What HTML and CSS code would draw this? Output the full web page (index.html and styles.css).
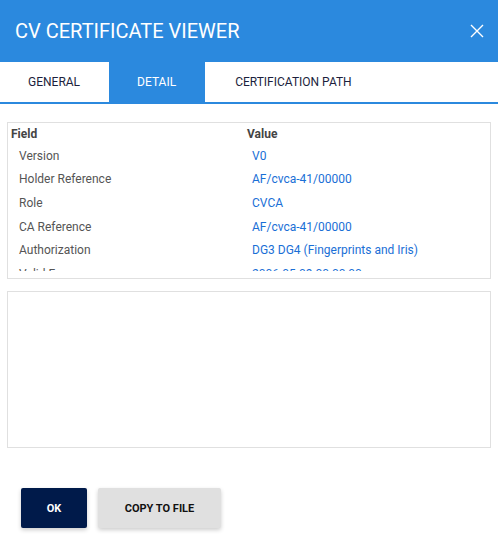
FILE: index.html
```html
<!DOCTYPE html>
<html lang="en">
<head>
  <meta charset="UTF-8">
  <meta name="viewport" content="width=device-width, initial-scale=1.0">
  <title>CV Certificate Viewer</title>
  <link rel="stylesheet" href="styles.css">
</head>
<body>
  <div class="dialog">
    <div class="dialog-header">
      <h2>CV CERTIFICATE VIEWER</h2>
      <button class="close-btn" aria-label="Close">
        <svg width="14" height="14" viewBox="0 0 14 14"><path d="M1 1L13 13M13 1L1 13" stroke="#fff" stroke-width="1.4" fill="none"/></svg>
      </button>
    </div>

    <div class="tabs">
      <div class="tab">GENERAL</div>
      <div class="tab active">DETAIL</div>
      <div class="tab">CERTIFICATION PATH</div>
    </div>

    <div class="dialog-body">
      <div class="detail-table">
        <div class="table-scroll">
          <div class="row head">
            <span class="field">Field</span>
            <span class="value">Value</span>
          </div>
          <div class="row">
            <span class="field">Version</span>
            <span class="value">V0</span>
          </div>
          <div class="row">
            <span class="field">Holder Reference</span>
            <span class="value">AF/cvca-41/00000</span>
          </div>
          <div class="row">
            <span class="field">Role</span>
            <span class="value">CVCA</span>
          </div>
          <div class="row">
            <span class="field">CA Reference</span>
            <span class="value">AF/cvca-41/00000</span>
          </div>
          <div class="row">
            <span class="field">Authorization</span>
            <span class="value">DG3 DG4 (Fingerprints and Iris)</span>
          </div>
          <div class="row">
            <span class="field">Valid From</span>
            <span class="value">2006-05-09 00:00:00</span>
          </div>
          <div class="row">
            <span class="field">Valid To</span>
            <span class="value">2009-05-09 00:00:00</span>
          </div>
        </div>
      </div>

      <div class="detail-text"></div>
    </div>

    <div class="dialog-footer">
      <button class="btn btn-primary">OK</button>
      <button class="btn btn-secondary">COPY TO FILE</button>
    </div>
  </div>
</body>
</html>
```

FILE: styles.css
```css
body {
  margin: 0;
  font-family: Roboto, "Liberation Sans", Arial, sans-serif;
  background-color: #fff;
}
.dialog {
  width: 498px;
  height: 541px;
  background-color: #fff;
}
.dialog-header {
  background-color: #2b89de;
  height: 62px;
  display: flex;
  align-items: center;
  justify-content: space-between;
  padding: 0 14px 0 15px;
  box-sizing: border-box;
}
.dialog-header h2 {
  margin: 0;
  color: #fff;
  font-size: 20px;
  font-weight: 400;
}
.close-btn {
  background: none;
  border: none;
  padding: 0;
  width: 14px;
  height: 14px;
  display: flex;
  cursor: pointer;
}
.tabs {
  display: flex;
  height: 40px;
  border-bottom: 2px solid #2b89de;
}
.tab {
  padding: 0 29px 0 28px;
  display: flex;
  align-items: center;
  font-size: 12px;
  font-weight: 400;
  color: #1c1f3d;
}
.tab.active {
  background-color: #2b89de;
  color: #fff;
}
.tab:last-child {
  padding-left: 30px;
}
.dialog-body {
  padding: 18px 7px 0;
}
.detail-table {
  border: 1px solid #e0e0e0;
  height: 155px;
}
.table-scroll {
  height: 148px;
  overflow: hidden;
  font-size: 12px;
}
.row {
  display: flex;
  height: 23.6px;
  align-items: center;
}
.row .field {
  width: 233px;
  padding-left: 11px;
  color: #555;
}
.row .value {
  color: #1a6fd6;
}
.row.head {
  height: 20px;
  margin-top: 1px;
}
.row.head .field {
  padding-left: 3px;
  width: 236px;
  font-weight: 700;
  color: #444;
}
.row.head .value {
  color: #444;
  font-weight: 700;
}
.detail-text {
  margin-top: 12px;
  border: 1px solid #e0e0e0;
  height: 155px;
}
.dialog-footer {
  display: flex;
  gap: 11px;
  padding: 40px 0 0 21px;
}
.btn {
  height: 40px;
  border: none;
  border-radius: 2px;
  font-family: Roboto, "Liberation Sans", Arial, sans-serif;
  font-size: 11px;
  font-weight: 700;
  cursor: pointer;
  box-shadow: 0 2px 4px rgba(0, 0, 0, 0.2);
}
.btn-primary {
  width: 66px;
  background-color: #001a4a;
  color: #fff;
}
.btn-secondary {
  width: 123px;
  background-color: #e0e0e0;
  color: #111;
}
```
